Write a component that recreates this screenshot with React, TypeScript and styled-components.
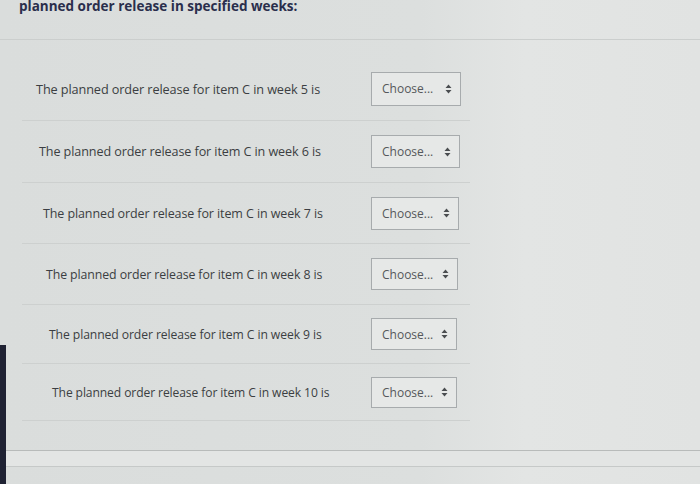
import styled, { createGlobalStyle } from 'styled-components';
import { FC } from 'react';

const GlobalStyle = createGlobalStyle`
  html, body {
    margin: 0;
    padding: 0;
    background: #dcdfde;
  }
`;

const Page = styled.div`
  position: relative;
  width: 700px;
  height: 484px;
  overflow: hidden;
  background: linear-gradient(90deg, #dadddc 0%, #dcdfde 60%, #e3e5e4 75%, #e1e3e2 100%);
  font-family: 'Open Sans', 'Liberation Sans', sans-serif;

  &::before {
    content: '';
    position: absolute;
    left: 0;
    top: 345px;
    bottom: 0;
    width: 6px;
    background: #1f2233;
  }
`;

const Heading = styled.h2`
  margin: -4px 0 0;
  padding: 0 0 0 19px;
  height: 44px;
  font-size: 13.5px;
  font-weight: 700;
  line-height: 20px;
  color: #2a2e4c;
  border-bottom: 1px solid #cbcecd;
  box-sizing: border-box;
`;

const List = styled.div`
  display: flex;
  flex-direction: column;
  margin: 0 0 0 22px;
  padding-top: 17px;
  width: 448px;
`;

const Row = styled.div<{ $height: number }>`
  display: grid;
  grid-template-columns: 349px auto;
  align-items: center;
  height: ${(p) => p.$height}px;
  border-bottom: 1px solid #cdd0cf;
  box-sizing: border-box;
`;

const Label = styled.span<{ $indent: number; $size: number }>`
  padding-left: ${(p) => p.$indent}px;
  font-size: ${(p) => p.$size}px;
  color: #3b3e42;
  letter-spacing: -0.1px;
`;

const Select = styled.div<{ $width: number; $height: number }>`
  display: flex;
  align-items: center;
  justify-content: space-between;
  width: ${(p) => p.$width}px;
  height: ${(p) => p.$height}px;
  padding: 0 8px 0 10px;
  box-sizing: border-box;
  border: 1px solid #a7abad;
  background: #e6e8e7;
  font-size: 12px;
  color: #55585b;
`;

const Footer = styled.div`
  margin-top: 29px;
  height: 15px;
  border-top: 1px solid #b8bbba;
  border-bottom: 1px solid #c6c9c8;
  background: #e3e5e4;
`;

const Arrows: FC = () => (
  <svg width="7" height="10" viewBox="0 0 7 10">
    <path d="M3.5 0.5 L6.5 4 H0.5 Z M3.5 9.5 L6.5 6 H0.5 Z" fill="#4a4d50" />
  </svg>
);

const rows = [
  { week: 5, height: 64, indent: 14, size: 12.7, selW: 90, selH: 34 },
  { week: 6, height: 62, indent: 17, size: 12.6, selW: 89, selH: 33 },
  { week: 7, height: 61, indent: 21, size: 12.5, selW: 88, selH: 33 },
  { week: 8, height: 61, indent: 24, size: 12.35, selW: 87, selH: 32 },
  { week: 9, height: 59, indent: 27, size: 12.2, selW: 86, selH: 32 },
  { week: 10, height: 57, indent: 30, size: 12.1, selW: 86, selH: 31 },
];

const App: FC = () => (
  <Page>
    <GlobalStyle />
    <Heading>planned order release in specified weeks:</Heading>
    <List>
      {rows.map((r) => (
        <Row key={r.week} $height={r.height}>
          <Label $indent={r.indent} $size={r.size}>
            The planned order release for item C in week {r.week} is
          </Label>
          <Select $width={r.selW} $height={r.selH}>
            Choose...
            <Arrows />
          </Select>
        </Row>
      ))}
    </List>
    <Footer />
  </Page>
);

export default App;
